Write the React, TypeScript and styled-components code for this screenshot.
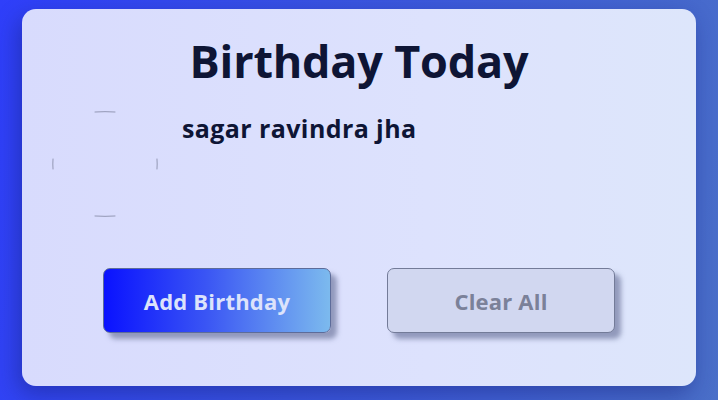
import React from "react";
import styled, { createGlobalStyle } from "styled-components";

const Global = createGlobalStyle`
  html, body { margin: 0; padding: 0; }
  body {
    width: 718px;
    height: 400px;
    overflow: hidden;
    background: linear-gradient(100deg, #2f3ffa 0%, #3a55e0 45%, #4a6fc8 100%);
    font-family: "Open Sans", "Noto Sans", sans-serif;
  }
`;

const Page = styled.div`
  box-sizing: border-box;
  width: 718px;
  height: 400px;
  padding: 9px 22px 14px 22px;
  display: flex;
`;

const Card = styled.div`
  flex: 1;
  border-radius: 14px;
  background: linear-gradient(90deg, #d8dbfd 0%, #dde2fd 60%, #dde6fb 100%);
  box-shadow: -4px 8px 22px rgba(20, 30, 120, 0.45);
  display: flex;
  flex-direction: column;
  padding: 22px 30px 0 30px;
`;

const Title = styled.h1`
  margin: 0;
  text-align: center;
  font-size: 45px;
  line-height: 60px;
  font-weight: 700;
  color: #0e1535;
  letter-spacing: -0.2px;
`;

const Person = styled.div`
  display: flex;
  align-items: flex-start;
  gap: 24px;
  margin-top: 20px;
`;

const Avatar = styled.svg`
  width: 106px;
  height: 106px;
  flex: none;
`;

const Name = styled.div`
  font-size: 25px;
  font-weight: 700;
  color: #0e1535;
  line-height: 30px;
  letter-spacing: 0.4px;
  margin-top: 2px;
`;

const Actions = styled.div`
  display: flex;
  justify-content: space-between;
  padding: 0 51px 0 51px;
  margin-top: 51px;
`;

const Button = styled.button<{ $primary?: boolean }>`
  width: 228px;
  height: 65px;
  border-radius: 7px;
  border: 1px solid ${(p) => (p.$primary ? "#5d6c9a" : "#737b98")};
  background: ${(p) =>
    p.$primary
      ? "linear-gradient(90deg, #0a12ff 0%, #3a55f4 45%, #7cbaee 100%)"
      : "#d1d7f0"};
  color: ${(p) => (p.$primary ? "#dce3fb" : "#7b8199")};
  font-family: "Open Sans", "Noto Sans", sans-serif;
  font-size: 22px;
  font-weight: 700;
  letter-spacing: 0.2px;
  box-shadow: 6px 6px 5px rgba(120, 128, 165, 0.75);
  cursor: pointer;
`;

export default function App() {
  return (
    <>
      <Global />
      <Page>
        <Card>
          <Title>Birthday Today</Title>
          <Person>
            <Avatar viewBox="0 0 106 106">
              <g fill="none" stroke="#8b90ab" strokeWidth="0.9" strokeLinecap="round">
                <path d="M43 1 Q53 0.3 63 1" />
                <path d="M43 105 Q53 105.7 63 105" />
                <path d="M1 48 Q0.6 53 1 58" />
                <path d="M105 48 Q105.4 53 105 58" />
              </g>
            </Avatar>
            <Name>sagar ravindra jha</Name>
          </Person>
          <Actions>
            <Button $primary>Add Birthday</Button>
            <Button>Clear All</Button>
          </Actions>
        </Card>
      </Page>
    </>
  );
}
